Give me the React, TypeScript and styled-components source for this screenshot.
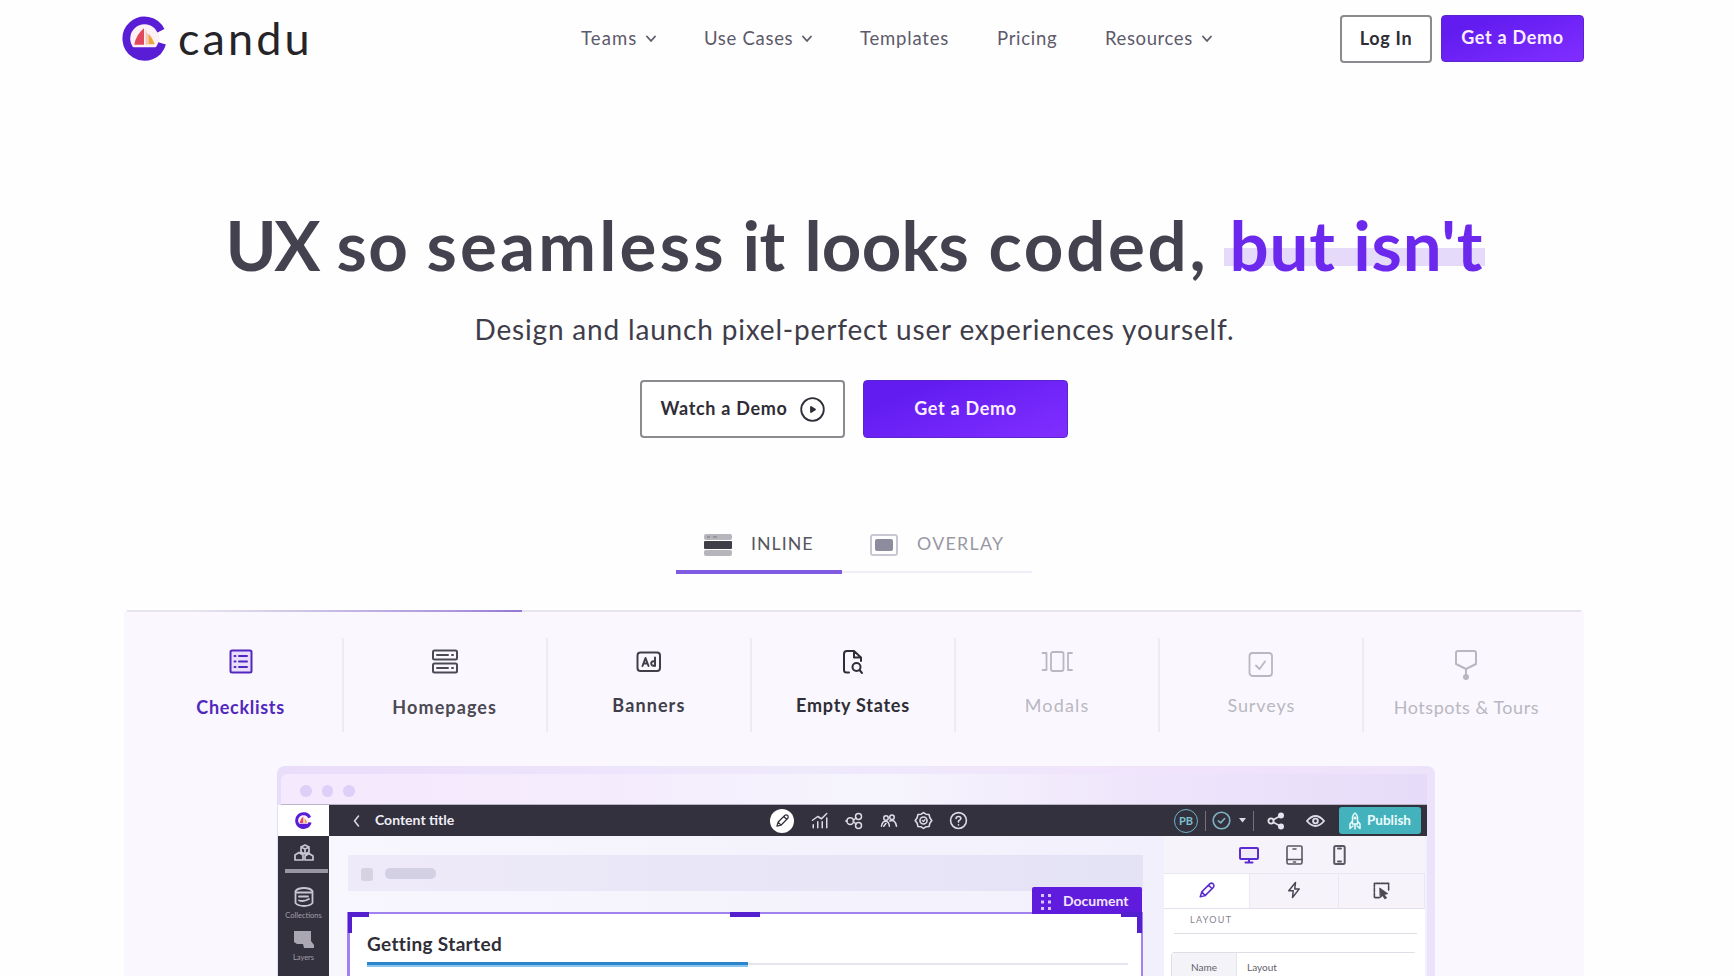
import type { ReactNode } from "react";
import styled, { createGlobalStyle } from "styled-components";

const GlobalStyle = createGlobalStyle`
  :root {
    --color-brand: #6a1ff5;
    --color-brand-dark: #4c22c4;
    --color-ink: #403d4a;
    --color-dark: #34313f;
    --color-muted: #8e8c98;
    --color-line: #e6e5ee;
  }

  * {
    box-sizing: border-box;
    margin: 0;
    padding: 0;
  }

  body {
    background-color: #fefefe;
    font-family: Lato, sans-serif;
    color: var(--color-ink);
    overflow: hidden;
  }

  svg {
    display: block;
    flex-shrink: 0;
  }
`;

const StyledPage = styled.div`
  width: 1734px;
  height: 976px;
  overflow: hidden;
  display: flex;
  flex-direction: column;
`;

/* Fixed measure label, keeps the neighbours in place */
const StyledText = styled.span<{ $w: number; $size: number; $ls?: number; $weight?: number }>`
  display: block;
  flex-shrink: 0;
  width: ${(p) => p.$w}px;
  font-size: ${(p) => p.$size}px;
  letter-spacing: ${(p) => p.$ls ?? 0}px;
  font-weight: ${(p) => p.$weight ?? 400};
  line-height: 1.2;
  white-space: nowrap;
`;

const StyledHeader = styled.header`
  height: 78px;
  padding: 15px 150px 0 122px;
  display: flex;
  align-items: flex-start;
`;

const StyledLogo = styled.div`
  display: flex;
  align-items: flex-start;
  gap: 11px;
  width: 459px;
  padding-top: 1px;
  color: #252429;

  span {
    margin-top: -5px;
  }
`;

const StyledNav = styled.nav`
  display: flex;
  align-items: center;
  gap: 48px;
  height: 46px;
  width: 759px;
  color: #5d5a6b;
`;

const StyledNavItem = styled.div`
  display: flex;
  align-items: center;
  gap: 9px;

  svg {
    margin-top: 2px;
  }
`;

const StyledAccount = styled.div`
  display: flex;
  gap: 9px;
`;

const StyledButton = styled.button<{ $w: number; $h: number; $primary?: boolean }>`
  display: flex;
  align-items: center;
  justify-content: center;
  gap: 12px;
  flex-shrink: 0;
  width: ${(p) => p.$w}px;
  height: ${(p) => p.$h}px;
  font-family: inherit;
  border-radius: 4px;
  border: ${(p) => (p.$primary ? "1px solid #5b24cf" : "2px solid #8b8a8f")};
  color: ${(p) => (p.$primary ? "#fbefff" : "#2f2d36")};
  background: ${(p) => (p.$primary ? "linear-gradient(160deg, #621cf0 20%, #7f2dff 95%)" : "#fff")};

  span {
    margin-top: -1px;
  }
`;

const StyledHero = styled.section`
  display: flex;
  flex-direction: column;
  align-items: center;
  height: 532px;
  padding-top: 126px;
`;

const StyledTitle = styled.h1`
  display: flex;
  width: 1259px;
  height: 90px;
  margin-left: -24px;
  color: #45424f;
`;

const StyledHighlight = styled.span`
  display: block;
  height: 83px;
  margin-left: 2px;
  padding-left: 6px;
  width: 261px;
  color: #6d28ee;
  background: linear-gradient(#e6dafb, #e6dafb) 0 44px / 261px 18px no-repeat;
`;

const StyledSubtitle = styled.p`
  width: 759px;
  margin: 19px 26px 0 0;
  height: 67px;
`;

const StyledActions = styled.div`
  display: flex;
  gap: 18px;
  margin-right: 26px;
`;

const StyledTabs = styled.div`
  display: flex;
  width: 356px;
  margin: 87px 26px 0 0;
`;

const StyledTab = styled.div<{ $w: number; $active?: boolean }>`
  display: flex;
  gap: 19px;
  width: ${(p) => p.$w}px;
  height: ${(p) => (p.$active ? 49 : 48)}px;
  padding: 8px 0 0 28px;
  border-bottom: ${(p) => (p.$active ? "4px solid #7e5be0" : "2px solid #efedf5")};
  color: ${(p) => (p.$active ? "#57555f" : "#9a98a3")};
`;

const StyledShowcase = styled.section`
  width: 1460px;
  height: 366px;
  margin-left: 124px;
  background-color: #faf8fe;
  border-radius: 4px 4px 0 0;
`;

const StyledProgressLine = styled.div`
  height: 2px;
  margin: 0 3px;
  background: linear-gradient(90deg, #e6e5ee 70px, #ab95dc 330px, #9478d4 395px, #e6e5ee 395px);
`;

const StyledFeatures = styled.div`
  display: grid;
  grid-template-columns: repeat(7, 204.15px);
  height: 154px;
  padding: 26px 0 0 15.5px;
`;

const StyledFeature = styled.div<{ $color: string; $low?: boolean }>`
  display: flex;
  flex-direction: column;
  align-items: center;
  height: 94px;
  border-right: 2px solid #eeecf3;
  color: ${(p) => p.$color};

  &:last-child {
    border-right: 0;
  }

  span {
    margin-top: ${(p) => (p.$low ? 9 : 7)}px;
    text-align: center;
  }
`;

const StyledIconBox = styled.div`
  height: 50px;
  padding-top: 11px;
`;

const StyledBrowser = styled.div`
  width: 1158px;
  height: 210px;
  margin-left: 153px;
  padding: 8px 8px 0 3px;
  border-radius: 8px 8px 0 0;
  border-left: 1px solid #e3dcf8;
  background: linear-gradient(90deg, #e9ddfa, #efe9fc 45%, #f0e2fb 85%, #ece3fa);
`;

const StyledChrome = styled.div`
  display: flex;
  gap: 10px;
  height: 31px;
  padding: 11px 0 0 19px;
  border-radius: 6px 0 0 0;
  background: linear-gradient(90deg, #f5e9fd, #f4ecfd 30%, #f6f5fd 52%, #efe5fb 75%, #e6dcf9);
  border-bottom: 1px solid #b9b3c4;
`;

const StyledDot = styled.i`
  width: 11.5px;
  height: 11.5px;
  border-radius: 50%;
  background-color: #dcd0f8;
`;

const StyledApp = styled.div`
  display: grid;
  grid-template-columns: 51px 1098px;
  grid-template-rows: 31px 140px;
  margin-left: -3px;
`;

const StyledBrandCell = styled.div`
  display: flex;
  align-items: center;
  justify-content: center;
  background-color: #fff;
`;

const StyledToolbar = styled.div`
  display: flex;
  align-items: center;
  background-color: var(--color-dark);
  color: #dddbe6;
  padding-left: 24px;

  span {
    margin: -1px 0 0 15px;
    color: #efeef4;
  }
`;

const StyledTools = styled.div`
  display: flex;
  align-items: center;
  flex-shrink: 0;
  gap: 16.2px;
  width: 404px;
  margin-left: 315px;
`;

const StyledPencilCircle = styled.div`
  display: flex;
  align-items: center;
  justify-content: center;
  width: 24px;
  height: 24px;
  margin-right: 1px;
  border-radius: 50%;
  background-color: #fff;
  color: #34313f;
`;

const StyledAvatar = styled.div`
  width: 24px;
  height: 24px;
  border: 1.5px solid #6fb4c4;
  border-radius: 50%;
  color: #7cc0cc;
  font-size: 11px;
  font-weight: 700;
  line-height: 21px;
  text-align: center;
`;

const StyledSeparator = styled.i<{ $l: number; $r: number }>`
  width: 1px;
  height: 20px;
  margin: 0 ${(p) => p.$r}px 0 ${(p) => p.$l}px;
  background-color: #74717e;
`;

const StyledActionsRight = styled.div`
  display: flex;
  align-items: center;
`;

const StyledCaret = styled.div`
  margin-left: 8px;
`;

const StyledEye = styled.div`
  margin-left: 21px;
`;

const StyledPublish = styled.div`
  display: flex;
  align-items: center;
  width: 82px;
  height: 27px;
  margin-left: 14px;
  padding-left: 10px;
  border-radius: 3px;
  background-color: #44b2bd;
  color: #e9fbfc;

  span {
    margin-left: 6px;
    color: #eefcfd;
  }
`;

const StyledSidebar = styled.aside`
  display: flex;
  flex-direction: column;
  align-items: center;
  background-color: var(--color-dark);
  color: #c9c6d2;
  padding-top: 8px;
`;

const StyledSideLabel = styled.span`
  display: block;
  flex-shrink: 0;
  height: 20px;
  margin-top: 4px;
  color: #a19eab;
  font-size: 7.5px;
  line-height: 9px;
`;

const StyledSideLine = styled.i`
  flex-shrink: 0;
  width: 43px;
  height: 4px;
  margin: 7px 0 14px 5px;
  background-color: #9a97a4;
`;

const StyledWorkspace = styled.div`
  display: grid;
  grid-template-columns: 835px 261px;
  background: linear-gradient(90deg, #f8f7fe, #f1f0fc 75%, #f5eefc);
`;

const StyledCanvas = styled.div`
  padding: 19px 0 0 18px;
`;

const StyledPlaceholder = styled.div`
  display: flex;
  gap: 12px;
  width: 795px;
  height: 36px;
  margin-left: 1px;
  padding: 13px 0 0 13px;
  background: linear-gradient(90deg, #efeafa, #e9e7f7 40%, #e4e2f5);

  i {
    width: 12px;
    height: 13px;
    border-radius: 3px;
    background-color: #d6d2e4;
  }

  i + i {
    width: 51px;
    height: 11px;
    border-radius: 5px;
    background-color: #d4d0e3;
  }
`;

const StyledDocument = styled.div`
  position: relative;
  width: 796px;
  height: 80px;
  margin-top: 21px;
  padding: 19px 13px 0 17px;
  border: solid #a182ee;
  border-width: 2px 2px 0 3px;
  background-color: #fff;
  color: #302e37;
`;

const StyledTag = styled.div`
  position: absolute;
  top: -27px;
  right: -1px;
  display: flex;
  align-items: center;
  gap: 11px;
  width: 110px;
  height: 27px;
  padding: 2px 0 0 8px;
  border-radius: 2px 2px 0 0;
  background-color: #5f1cdc;
  color: #f3e6ff;
`;

const StyledHandle = styled.i<{ $side: "left" | "center" | "right" }>`
  position: absolute;
  top: -2px;
  height: ${(p) => (p.$side === "center" ? 6 : 21)}px;
  width: ${(p) => (p.$side === "center" ? 30 : 21)}px;
  border-top: 5px solid #5420cf;
  ${(p) => p.$side === "left" && "left: -2px; border-left: 4px solid #5420cf;"}
  ${(p) => p.$side === "center" && "left: 380px;"}
  ${(p) => p.$side === "right" && "right: -1px; border-right: 5px solid #5420cf;"}
`;

const StyledMeter = styled.div`
  height: 5px;
  margin-top: 6px;
  background:
    linear-gradient(#2d86cc 0 60%, #8ac6ec 60%) 0 0 / 381px 5px no-repeat,
    linear-gradient(#e5e4ec, #e5e4ec) 0 1px / 100% 2px no-repeat;
`;

const StyledInspector = styled.aside`
  background-color: #fff;
`;

const StyledDevices = styled.div`
  display: flex;
  align-items: center;
  height: 38px;
  padding: 0 0 0 75px;
  border-bottom: 1px solid #eae8f0;
  background-color: #f6f4fa;
  color: #5a5763;
`;

const StyledDevice = styled.div<{ $w: number }>`
  width: ${(p) => p.$w}px;
`;

const StyledModes = styled.div`
  display: grid;
  grid-template-columns: 86px 89px 86px;
  height: 35px;
  color: #4a4753;
`;

const StyledMode = styled.div<{ $active?: boolean }>`
  display: flex;
  justify-content: center;
  padding-top: 7px;
  border-right: 1px solid #eae8f0;
  border-bottom: 1px solid #e2e0e8;
  background-color: ${(p) => (p.$active ? "#fff" : "#f6f4fa")};
`;

const StyledSectionName = styled.div`
  height: 25px;
  margin: 0 8px 0 10px;
  padding: 6px 0 0 16px;
  border-bottom: 1px solid #dddbe3;
  color: #85828e;
`;

const StyledField = styled.div`
  display: grid;
  grid-template-columns: 65px 180px;
  width: 245px;
  height: 40px;
  margin: 18px 0 0 7px;
  border: 1px solid #dfdde5;
  border-radius: 3px;
  color: #63606b;
`;

const StyledFieldCell = styled.div<{ $label?: boolean }>`
  padding: 8px 0 0 ${(p) => (p.$label ? 19 : 10)}px;
  background-color: ${(p) => (p.$label ? "#f4f3f7" : "#fff")};
  border-right: ${(p) => (p.$label ? "1px solid #e6e4ec" : "0")};
`;

function LogoMark({ size }: { size: number }) {
  return (
    <svg width={size} height={size} viewBox="0 0 46 46">
      <circle cx="23.5" cy="23" r="15" fill="#fdf1f5" />
      <path d="M39.8 15A18.6 18.6 0 1 0 41 28" fill="none" stroke="#591dd6" strokeWidth="8" />
      <path d="M9 32H38L34 41Q23 47 12 41Z" fill="#591dd6" />
      <path d="M22.5 12.5V29.5H12.5Q14.5 18.5 22.5 12.5Z" fill="#e2485c" />
      <path d="M24 14L26.500 19V29.5H24Z" fill="#f9c3b6" />
      <path d="M27 18Q31 22 33.5 29H27Z" fill="#eda43a" />
    </svg>
  );
}

type IconProps = { w: number; h?: number; box?: string; sw?: number; color?: string; children: ReactNode };

function Icon({ w, h, box = "0 0 24 24", sw = 2, color = "currentColor", children }: IconProps) {
  return (
    <svg
      width={w}
      height={h ?? w}
      viewBox={box}
      fill="none"
      stroke={color}
      strokeWidth={sw}
      strokeLinecap="round"
      strokeLinejoin="round"
    >
      {children}
    </svg>
  );
}

function Chevron() {
  return (
    <Icon w={10} h={8} box="0 0 10 8" sw={1.8}>
      <path d="M1 1.5L5 6L9 1.5" />
    </Icon>
  );
}

const navItems = [
  { label: "Teams", w: 56, ls: 1.1, menu: true },
  { label: "Use Cases", w: 89, ls: 0.7, menu: true },
  { label: "Templates", w: 89, ls: 0.8 },
  { label: "Pricing", w: 60, ls: 0.7 },
  { label: "Resources", w: 88, ls: 0.6, menu: true },
];

const titleWords = [
  { word: "UX", w: 111, ls: -2.5 },
  { word: "so", w: 90, ls: 1.5 },
  { word: "seamless", w: 316, ls: 3.2 },
  { word: "it", w: 62, ls: -0.5 },
  { word: "looks", w: 184, ls: 0.2 },
  { word: "coded,", w: 233, ls: 2.7 },
];

const dim = "#b9b7c0";

const features = [
  {
    label: "Checklists",
    color: "#5227bd",
    low: true,
    weight: 700,
    w: 90,
    ls: 0.7,
    icon: (
      <Icon w={24} h={26} box="0 0 24 26">
        <rect x="1.5" y="1.5" width="21" height="22" rx="1.5" fill="#e9defc" />
        <path d="M5.5 7h1M10 7h8M5.5 12.5h1M10 12.5h8M5.5 18h1M10 18h8" />
      </Icon>
    ),
  },
  {
    label: "Homepages",
    color: "#4b4954",
    low: true,
    weight: 700,
    w: 106,
    ls: 1.1,
    icon: (
      <Icon w={26} h={26} box="0 0 26 26">
        <rect x="1" y="1.5" width="24" height="9" rx="1.5" />
        <rect x="1" y="14.5" width="24" height="9" rx="1.5" />
        <path d="M5 6h11M20 6h1M5 19h11M20 19h1" />
      </Icon>
    ),
  },
  {
    label: "Banners",
    color: "#403e49",
    low: false,
    weight: 700,
    w: 73,
    ls: 1.1,
    icon: (
      <Icon w={26} h={26} box="0 0 26 26">
        <rect x="1.5" y="3.5" width="22.5" height="18.5" rx="3" />
        <path d="M6.5 17L9.5 9L12.5 17M7.5 14.5h4M19 8.5V17M19 13.5a2 2.2 0 1 0 0 2" />
      </Icon>
    ),
  },
  {
    label: "Empty States",
    color: "#2f2d36",
    low: false,
    weight: 700,
    w: 114,
    ls: 0.75,
    icon: (
      <Icon w={24} h={26} box="0 0 24 26">
        <path d="M8 23.5H5.500Q3 23.5 3 21V5Q3 2 6 2H13L20 8.5V12M13 2V8.5H20" />
        <circle cx="15.5" cy="18" r="4" />
        <path d="M18.5 21L21 24" />
      </Icon>
    ),
  },
  {
    label: "Modals",
    color: dim,
    low: false,
    weight: 400,
    w: 66,
    ls: 1.2,
    icon: (
      <Icon w={32} h={26} box="0 0 32 26" sw={1.8}>
        <rect x="10" y="3" width="12.5" height="19" rx="2" />
        <path d="M1.5 4H5.5V21H1.5M31 4H27V21H31" />
      </Icon>
    ),
  },
  {
    label: "Surveys",
    color: dim,
    low: false,
    weight: 400,
    w: 68,
    ls: 0.9,
    icon: (
      <Icon w={26} h={30} box="0 0 26 30" sw={1.8}>
        <rect x="1.5" y="4" width="22.5" height="23" rx="3" />
        <path d="M8 16.5L11.5 20L17 12.5" />
      </Icon>
    ),
  },
  {
    label: "Hotspots & Tours",
    color: dim,
    low: true,
    weight: 400,
    w: 146,
    ls: 0.55,
    icon: (
      <Icon w={24} h={32} box="0 0 24 32">
        <path d="M4 2H20Q22 2 22 4V15L12 20L2 15V4Q2 2 4 2ZM12 20V26" />
        <circle cx="12" cy="28" r="3" fill={dim} stroke="none" />
      </Icon>
    ),
  },
];

function Header() {
  return (
    <StyledHeader>
      <StyledLogo>
        <LogoMark size={45} />
        <StyledText $w={134} $size={45} $ls={3.1}>candu</StyledText>
      </StyledLogo>
      <StyledNav>
        {navItems.map((item) => (
          <StyledNavItem key={item.label}>
            <StyledText $w={item.w} $size={18.5} $ls={item.ls}>{item.label}</StyledText>
            {item.menu && <Chevron />}
          </StyledNavItem>
        ))}
      </StyledNav>
      <StyledAccount>
        <StyledButton $w={92} $h={48}>
          <StyledText $w={54} $size={18} $weight={700} $ls={0.7}>Log In</StyledText>
        </StyledButton>
        <StyledButton $w={143} $h={47} $primary>
          <StyledText $w={104} $size={18} $weight={700} $ls={0.7}>Get a Demo</StyledText>
        </StyledButton>
      </StyledAccount>
    </StyledHeader>
  );
}

function Hero() {
  return (
    <StyledHero>
      <StyledTitle>
        {titleWords.map((t) => (
          <StyledText key={t.word} $w={t.w} $size={69} $weight={700} $ls={t.ls}>{t.word} </StyledText>
        ))}
        <StyledHighlight>
          <StyledText $w={255} $size={69} $weight={700} $ls={0.8}>but isn't</StyledText>
        </StyledHighlight>
      </StyledTitle>
      <StyledSubtitle>
        <StyledText $w={759} $size={28} $ls={0.82}>Design and launch pixel-perfect user experiences yourself.</StyledText>
      </StyledSubtitle>
      <StyledActions>
        <StyledButton $w={205} $h={58}>
          <StyledText $w={128} $size={18} $weight={700} $ls={0.7}>Watch a Demo</StyledText>
          <Icon w={25} box="0 0 25 25" sw={1.8}>
            <circle cx="12.5" cy="12.5" r="11.3" />
            <path d="M11 10L15 12.5L11 15Z" fill="currentColor" />
          </Icon>
        </StyledButton>
        <StyledButton $w={205} $h={58} $primary>
          <StyledText $w={104} $size={18} $weight={700} $ls={0.7}>Get a Demo</StyledText>
        </StyledButton>
      </StyledActions>
      <StyledTabs>
        <StyledTab $w={166} $active>
          <svg width="28" height="24" viewBox="0 0 28 24">
            <rect x="0" y="1" width="28" height="6" rx="2" fill="#b6b5bb" />
            <path d="M3 4h3M9 4h4" stroke="#77757f" />
            <rect x="0" y="8" width="28" height="8" rx="1" fill="#3f3d46" />
            <rect x="0" y="17" width="28" height="6" rx="2" fill="#b6b5bb" />
          </svg>
          <StyledText $w={63} $size={17.8} $ls={1}>INLINE</StyledText>
        </StyledTab>
        <StyledTab $w={190}>
          <svg width="28" height="24" viewBox="0 0 28 24">
            <rect x="1" y="2" width="26" height="20" rx="2" fill="#fff" stroke="#c9c8d2" strokeWidth="2" />
            <rect x="5" y="6" width="18" height="12" rx="2" fill="#8d8c9e" />
          </svg>
          <StyledText $w={90} $size={17.8} $ls={1.3}>OVERLAY</StyledText>
        </StyledTab>
      </StyledTabs>
    </StyledHero>
  );
}

function Pencil({ size, color }: { size: number; color?: string }) {
  return (
    <Icon w={size} color={color}>
      <path d="M3 21L5 14.5L16 3.5Q18 2 20.5 4Q22 6.5 20.5 8.5L9.5 19.5ZM14 5.5L18.5 10M5 14.5L9.5 19.5" />
    </Icon>
  );
}

function Toolbar() {
  return (
    <StyledToolbar>
      <Icon w={7} h={12} box="0 0 7 12" sw={1.5}>
        <path d="M5.5 1L1.5 6L5.5 11" />
      </Icon>
      <StyledText $w={80} $size={14} $weight={700}>Content title</StyledText>
      <StyledTools>
        <StyledPencilCircle>
          <Pencil size={15} />
        </StyledPencilCircle>
        <Icon w={18}>
          <path d="M3 21V17M9 21V13M15 21V13M21 21V8M2 11L9 6L14 9L21 2" />
        </Icon>
        <Icon w={18}>
          <circle cx="7" cy="12" r="4.5" />
          <circle cx="18" cy="6" r="4" />
          <circle cx="18" cy="18" r="4" />
          <path d="M1 12h2M11 11L15 8M11 13L15 16" />
        </Icon>
        <Icon w={18}>
          <circle cx="8" cy="8" r="3" />
          <circle cx="16" cy="7" r="3" />
          <path d="M2 19Q3 12 8 12Q12 13 12.5 19M13 12Q20 9 22 19M5 19L8 15" />
        </Icon>
        <Icon w={19}>
          <path d="M12 2L15 4L19 4.5L20 8.5L22.5 12L20 15.5L19 19.5L15 20L12 22L9 20L5 19.5L4 15.5L1.5 12L4 8.5L5 4.5L9 4Z" />
          <circle cx="12" cy="12" r="4.5" />
          <path d="M10.5 12L12 13.5L14 10.5" strokeWidth="1.5" />
        </Icon>
        <Icon w={19}>
          <circle cx="12" cy="12" r="10" />
          <path d="M9 9.5Q9 7 12 7Q15 7 15 9.5Q15 11 12 12.5V14M12 17.5V17.6" />
        </Icon>
      </StyledTools>
      <StyledActionsRight>
        <StyledAvatar>PB</StyledAvatar>
        <StyledSeparator $l={7} $r={6} />
        <Icon w={19} color="#7fb3c2">
          <circle cx="12" cy="12" r="10.5" />
          <path d="M8 12.5L11 15L16 9.5" />
        </Icon>
        <StyledCaret>
          <svg width="7" height="5" viewBox="0 0 7 5">
            <path d="M0 0H7L3.5 4.5Z" fill="#dddbe6" />
          </svg>
        </StyledCaret>
        <StyledSeparator $l={7} $r={13} />
        <svg width="18" height="18" viewBox="0 0 18 18">
          <path d="M14 3.5L4 9L14 14.5" fill="none" stroke="#e6e4ee" strokeWidth="1.5" />
          <circle cx="14" cy="3.5" r="3" fill="#e6e4ee" />
          <circle cx="14" cy="14.5" r="3" fill="#e6e4ee" />
          <circle cx="4" cy="9" r="2.6" fill="#34313f" stroke="#e6e4ee" strokeWidth="1.8" />
        </svg>
        <StyledEye>
          <Icon w={19} h={14} box="0 0 20 14">
            <path d="M1 7Q10 -3.5 19 7Q10 17.5 1 7Z" />
            <circle cx="10" cy="7" r="2.5" />
          </Icon>
        </StyledEye>
        <StyledPublish>
          <Icon w={12} h={18} box="0 0 12 18" sw={1.5}>
            <path d="M3.5 12V5Q4 2.5 6 1Q8 2.5 8.5 5V12ZM3.5 9L1 12V16.5L4 14M8.5 9L11 12V16.5L8 14M6 12V17" />
            <circle cx="6" cy="6" r="0.8" />
          </Icon>
          <StyledText $w={46} $size={13.5} $weight={700}>Publish</StyledText>
        </StyledPublish>
      </StyledActionsRight>
    </StyledToolbar>
  );
}

function Sidebar() {
  return (
    <StyledSidebar>
      <Icon w={20} h={18} box="0 0 20 18" sw={1.7}>
        <path d="M7 8V3L11 1L15 3V8L11 10ZM1 16V11L5 8.5L9 11V16ZM11 16V12L15 9.5L19 12V16ZM7 3L11 5L15 3M11 5V9" />
      </Icon>
      <StyledSideLine />
      <Icon w={20} h={20} box="0 0 20 20" sw={1.8}>
        <path d="M1.5 4Q4 1 10 1Q16 1 18.5 4V16Q16 19 10 19Q4 19 1.5 16ZM2 5.5H18M5 9.5H14M5 13.5Q10 15 15 12" />
      </Icon>
      <StyledSideLabel>Collections</StyledSideLabel>
      <svg width="22" height="18" viewBox="0 0 22 18">
        <path d="M1 0H18V10L21 14V17H11L10 13H4L1 11Z" fill="#aaa7b3" />
      </svg>
      <StyledSideLabel>Layers</StyledSideLabel>
    </StyledSidebar>
  );
}

function Inspector() {
  return (
    <StyledInspector>
      <StyledDevices>
        <StyledDevice $w={47}>
          <Icon w={20} h={18} box="0 0 20 18" color="#5a2bd0">
            <rect x="1" y="2" width="18" height="11" rx="1" fill="#f1eafd" />
            <path d="M10 13V16M6.5 16.5H13.5" />
          </Icon>
        </StyledDevice>
        <StyledDevice $w={47}>
          <Icon w={17} h={20} box="0 0 17 20" sw={1.6}>
            <rect x="1" y="1" width="15" height="18" rx="1.5" />
            <path d="M1 14.5H16M7.5 17H9.5M7 4H10" />
          </Icon>
        </StyledDevice>
        <Icon w={13} h={20} box="0 0 13 20">
          <rect x="1.2" y="1" width="10.5" height="18" rx="1.5" />
          <path d="M5 3.5H8M5 16.5H8" />
        </Icon>
      </StyledDevices>
      <StyledModes>
        <StyledMode $active>
          <Pencil size={18} color="#5a2bd0" />
        </StyledMode>
        <StyledMode>
          <Icon w={18}>
            <path d="M14 2L5 13H11L10 22L19 10.5H13Z" />
          </Icon>
        </StyledMode>
        <StyledMode>
          <Icon w={19}>
            <path d="M9 21H3V3H21V12" strokeDasharray="5 1.5" />
            <path d="M10 9L20 16L15.5 17L18.5 21.5L16 22.5L13.5 18.5L10.5 21Z" fill="currentColor" strokeWidth="1" />
          </Icon>
        </StyledMode>
      </StyledModes>
      <StyledSectionName>
        <StyledText $w={50} $size={9} $ls={1.3}>LAYOUT</StyledText>
      </StyledSectionName>
      <StyledField>
        <StyledFieldCell $label>
          <StyledText $w={28} $size={10}>Name</StyledText>
        </StyledFieldCell>
        <StyledFieldCell>
          <StyledText $w={34} $size={10}>Layout</StyledText>
        </StyledFieldCell>
      </StyledField>
    </StyledInspector>
  );
}

function BrowserPreview() {
  return (
    <StyledBrowser>
      <StyledChrome>
        <StyledDot />
        <StyledDot />
        <StyledDot />
      </StyledChrome>
      <StyledApp>
        <StyledBrandCell>
          <LogoMark size={17} />
        </StyledBrandCell>
        <Toolbar />
        <Sidebar />
        <StyledWorkspace>
          <StyledCanvas>
            <StyledPlaceholder>
              <i />
              <i />
            </StyledPlaceholder>
            <StyledDocument>
              <StyledTag>
                <svg width="12" height="18" viewBox="0 0 12 18" fill="#d9c4ff">
                  <path d="M1 1h3v3h-3zM8 1h3v3h-3zM1 7.5h3v3h-3zM8 7.5h3v3h-3zM1 14h3v3h-3zM8 14h3v3h-3z" />
                </svg>
                <StyledText $w={68} $size={14} $weight={700}>Document</StyledText>
              </StyledTag>
              <StyledHandle $side="left" />
              <StyledHandle $side="center" />
              <StyledHandle $side="right" />
              <StyledText $w={137} $size={19} $weight={700} $ls={0.35}>Getting Started</StyledText>
              <StyledMeter />
            </StyledDocument>
          </StyledCanvas>
          <Inspector />
        </StyledWorkspace>
      </StyledApp>
    </StyledBrowser>
  );
}

function App() {
  return (
    <StyledPage>
      <GlobalStyle />
      <Header />
      <Hero />
      <StyledShowcase>
        <StyledProgressLine />
        <StyledFeatures>
          {features.map((f) => (
            <StyledFeature key={f.label} $color={f.color} $low={f.low}>
              <StyledIconBox>{f.icon}</StyledIconBox>
              <StyledText $w={f.w} $size={18} $weight={f.weight} $ls={f.ls}>{f.label}</StyledText>
            </StyledFeature>
          ))}
        </StyledFeatures>
        <BrowserPreview />
      </StyledShowcase>
    </StyledPage>
  );
}

export default App;
